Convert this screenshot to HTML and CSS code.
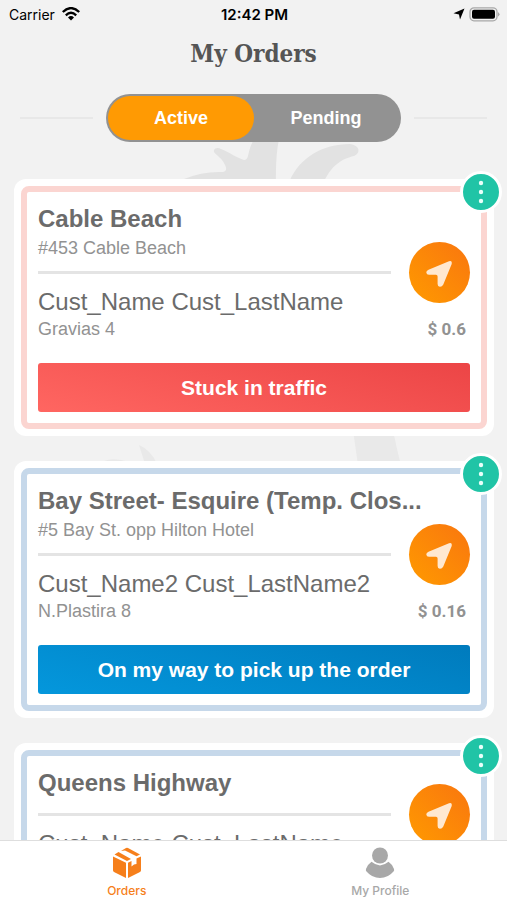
FILE: index.html
```html
<!DOCTYPE html>
<html lang="en">
<head>
<meta charset="utf-8">
<meta name="viewport" content="width=device-width, initial-scale=1">
<title>My Orders</title>
<link rel="stylesheet" href="styles.css">
</head>
<body>
<svg class="defs" width="0" height="0" aria-hidden="true">
  <symbol id="dots" viewBox="0 0 36 36"><circle cx="18" cy="9" r="2.2"/><circle cx="18" cy="18" r="2.2"/><circle cx="18" cy="27" r="2.2"/></symbol>
  <symbol id="arrow" viewBox="0 0 61 61"><path d="M40 19.300Q43.300 18.200 42.700 22L34.300 42.500Q33 45 30.800 44.800Q28.600 44.500 28.600 42V34.500Q28.600 32.800 27 32.800H20Q17.500 32.500 17.300 30.400Q17.200 28.700 19.500 27.700Z"/></symbol>
</svg>
<svg class="palm" viewBox="0 0 507 500" aria-hidden="true">
  <path d="M184 179Q203 171 223 172Q228 171 225 165C222 158 217 156 214 152C213 148 218 147 221 149C229 152 237 158 244 160Q247 160 248 156Q250 144 258 132H282Q275 143 276 190H184Z"/>
  <path d="M290 180C300 158 322 144 350 144C360 145 361 153 354 156C341 159 328 167 321 190H290Z"/>
  <path class="light" d="M139 445Q151 450 157 464H145ZM104 461Q114 457 129 462ZM353 430H393Q396 446 401 465H358Z"/>
</svg>
<div class="status">
  <span class="carrier">Carrier
    <svg width="18" height="14" viewBox="0 0 18 14" aria-hidden="true"><g fill="none" stroke="#000" stroke-width="2.300"><path d="M.8 5Q9-2.800 17.200 5"/><path d="M3.800 8.300Q9 3.300 14.200 8.300"/></g><path d="M6 10.400Q9 7.600 12 10.400L9 13.600Z"/></svg>
  </span>
  <span class="time">12:42 PM</span>
  <span class="power">
    <svg width="12" height="12" viewBox="0 0 12 12" aria-hidden="true"><path d="M11.500.5L7 11.500L6 6.500L.5 5.300Z"/></svg>
    <svg width="31" height="15" viewBox="0 0 31 15" aria-hidden="true"><rect x="1" y=".8" width="27" height="13" rx="4" fill="none" stroke="#a8a8a8" stroke-width="1.300"/><rect x="3" y="2.800" width="23" height="9" rx="2"/><path d="M29 5q3 2.300 0 4.600z" fill="#a8a8a8"/></svg>
  </span>
</div>
<h1>My Orders</h1>
<div class="switch-row">
  <div class="switch"><button type="button" class="active">Active</button><button type="button">Pending</button></div>
</div>
<main>
  <article class="card red">
    <button type="button" class="menu" aria-label="Order options"><svg viewBox="0 0 36 36"><use href="#dots"/></svg></button>
    <div class="frame">
      <h2>Cable Beach</h2>
      <p class="address">#453 Cable Beach</p>
      <div class="divider"><hr><button type="button" class="go" aria-label="Navigate"><svg viewBox="0 0 61 61"><use href="#arrow"/></svg></button></div>
      <p class="customer">Cust_Name Cust_LastName</p>
      <div class="details"><span>Gravias 4</span><span class="price">$ 0.6</span></div>
      <button type="button" class="state">Stuck in traffic</button>
    </div>
  </article>
  <article class="card blue">
    <button type="button" class="menu" aria-label="Order options"><svg viewBox="0 0 36 36"><use href="#dots"/></svg></button>
    <div class="frame">
      <h2>Bay Street- Esquire (Temp. Clos...</h2>
      <p class="address">#5 Bay St. opp Hilton Hotel</p>
      <div class="divider"><hr><button type="button" class="go" aria-label="Navigate"><svg viewBox="0 0 61 61"><use href="#arrow"/></svg></button></div>
      <p class="customer">Cust_Name2 Cust_LastName2</p>
      <div class="details"><span>N.Plastira 8</span><span class="price">$ 0.16</span></div>
      <button type="button" class="state">On my way to pick up the order</button>
    </div>
  </article>
  <article class="card blue">
    <button type="button" class="menu" aria-label="Order options"><svg viewBox="0 0 36 36"><use href="#dots"/></svg></button>
    <div class="frame">
      <h2>Queens Highway</h2>
      <div class="divider"><hr><button type="button" class="go" aria-label="Navigate"><svg viewBox="0 0 61 61"><use href="#arrow"/></svg></button></div>
      <p class="customer">Cust_Name Cust_LastName</p>
    </div>
  </article>
</main>
<nav>
  <a href="#orders" class="current">
    <svg width="30" height="32" viewBox="0 0 30 32" aria-hidden="true"><path d="M1 9.500L14 15.800V31L2 25Q1 24.500 1 23.200ZM16 15.800L19.500 14V19.500L22 17.500L24.500 17V11.500L29 9.500V23.200Q29 24.500 28 25L16 31ZM2.500 7.500L6.500 5L19 12L15 14ZM9 4L14 1Q15 .5 16 1L28 7.500L24.500 9.300L13 3.500Z"/></svg>
    <span>Orders</span>
  </a>
  <a href="#profile">
    <svg width="30" height="32" viewBox="0 0 30 32" aria-hidden="true"><circle cx="15" cy="8.500" r="8"/><path d="M6.500 14.800Q15 22 23.500 14.800Q27.500 17.500 29 22Q29.500 23.500 28.500 24.500Q23 31 15 31T1.500 24.500Q.5 23.500 1 22Q2.500 17.500 6.500 14.800Z"/></svg>
    <span>My Profile</span>
  </a>
</nav>
</body>
</html>
```
FILE: styles.css
```css
* { box-sizing: border-box; }
body {
  margin: 0;
  height: 100vh;
  display: flex;
  flex-direction: column;
  overflow: hidden;
  position: relative;
  background: #f2f2f2;
  color: #6b6b6b;
  font-family: "Liberation Sans", Arial, sans-serif;
}
h1, h2, p { margin: 0; }
button { border: 0; padding: 0; font: inherit; color: #fff; cursor: pointer; }
button svg { display: block; width: 100%; height: 100%; }
.defs { position: absolute; }
.palm { position: absolute; top: 0; left: 0; width: 100%; z-index: -1; fill: #e2e2e2; }
.palm .light { fill: #e9e9e9; }

.status {
  display: grid;
  grid-template-columns: 1fr auto 1fr;
  align-items: center;
  height: 28px;
  padding: 0 7px 0 9px;
  color: #000;
  font-family: Inter, sans-serif;
  font-size: 14px;
}
.carrier, .power { display: flex; align-items: center; gap: 7px; }
.power { justify-content: flex-end; gap: 4px; }
.time { font-size: 15px; font-weight: 600; }

h1 {
  color: #555;
  font: bold 24px/52px "Roboto Slab", "DejaVu Serif Condensed", "DejaVu Serif", serif;
  text-align: center;
}
.switch-row {
  display: flex;
  align-items: center;
  gap: 13px;
  margin-top: 14px;
  padding: 0 20px;
}
.switch-row::before, .switch-row::after { content: ""; flex: 1; height: 2px; background: #e8e8e8; }
.switch {
  display: flex;
  width: 63%;
  height: 48px;
  padding: 2px;
  border-radius: 24px;
  background: #929292;
}
.switch button { flex: 1; border-radius: 22px; background: none; font-size: 18px; font-weight: bold; }
.switch .active { background: #ff9a03; }

main {
  flex: 1;
  min-height: 0;
  overflow: hidden;
  display: flex;
  flex-direction: column;
  gap: 25px;
  padding: 37px 13px 0 14px;
}
.card {
  position: relative;
  flex: none;
  padding: 7px;
  border-radius: 12px;
  background: #fff;
}
.frame { padding: 11px; border: 6px solid #fbd5d1; border-radius: 8px; }
.blue .frame { border-color: #c6d8ea; }
.menu {
  position: absolute;
  top: -8px;
  right: -8px;
  width: 42px;
  height: 42px;
  border: 3px solid #fff;
  border-radius: 50%;
  background: #20c4a6;
  fill: #e9fffa;
}
h2 { font-size: 24px; line-height: 32px; white-space: nowrap; }
.address, .details { color: #929292; font-size: 18px; line-height: 21px; }
.address { margin: 3px 0 -2px; }
.divider { display: flex; align-items: center; gap: 18px; height: 3px; margin-top: 14px; }
.divider hr { flex: 1; height: 3px; margin: 0; border: 0; background: #e4e4e4; }
.go {
  flex: none;
  width: 61px;
  height: 61px;
  border-radius: 50%;
  background: linear-gradient(45deg, #ff9a00, #f9760f);
  fill: #ffe8d0;
}
.customer { margin-top: 12px; font-size: 24px; line-height: 32px; }
.details { display: flex; justify-content: space-between; margin-top: 1px; padding-right: 4px; }
.price { font-family: Roboto, sans-serif; font-size: 17px; font-weight: bold; }
.state {
  width: 100%;
  height: 49px;
  margin-top: 23px;
  border-radius: 3px;
  background: linear-gradient(15deg, #ff6661, #ec4546);
  font-size: 21px;
  font-weight: bold;
}
.blue .state { background: linear-gradient(15deg, #0497dc, #007bbd); }

nav {
  flex: none;
  display: flex;
  height: 60px;
  border-top: 1px solid #dedede;
  background: #fff;
  z-index: 1;
}
nav a {
  flex: 1;
  display: flex;
  flex-direction: column;
  align-items: center;
  gap: 4px;
  padding-top: 6px;
  color: #a8a8a8;
  fill: currentColor;
  font: 500 12px/16px Inter, sans-serif;
  text-decoration: none;
}
nav .current { color: #f67f1b; }
```
